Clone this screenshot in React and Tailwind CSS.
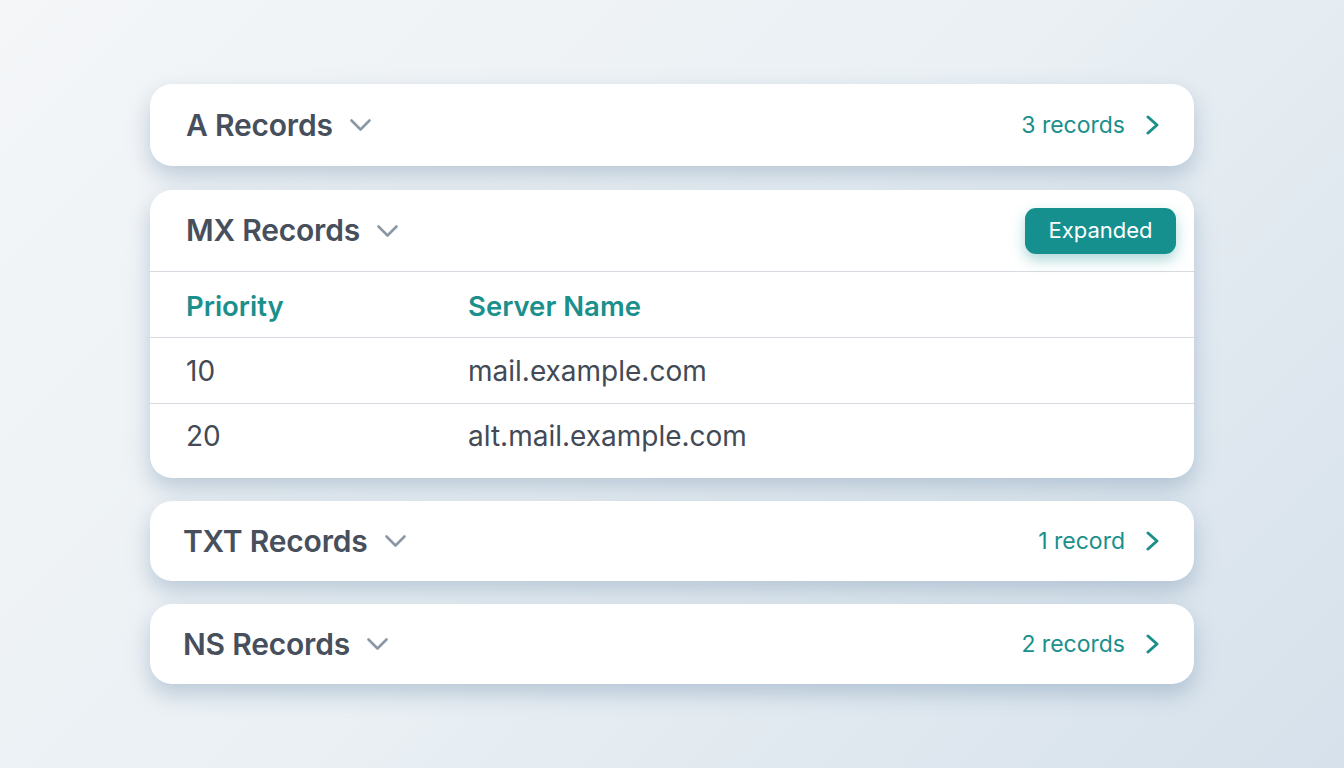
import React from "react";

const font = { fontFamily: "Inter, 'Noto Sans', sans-serif" };

function ChevronDown() {
  return (
    <svg width="23" height="14" viewBox="0 0 23 14" fill="none" stroke="#8a97a4" strokeWidth="2.6" strokeLinecap="round" strokeLinejoin="round">
      <path d="M2.5 2.5l9 9 9-9" />
    </svg>
  );
}

function ChevronRight() {
  return (
    <svg width="16" height="20" viewBox="0 0 16 20" fill="none" stroke="#1a8f8c" strokeWidth="3" strokeLinecap="round" strokeLinejoin="round">
      <path d="M3 2l9 8-9 8" />
    </svg>
  );
}

function Collapsed({ title, count, pl, h }) {
  return (
    <div className={`flex items-center justify-between rounded-[22px] bg-white pr-[33px] shadow-[0_10px_22px_rgba(110,140,170,0.4)] ${pl} ${h}`}>
      <div className="flex items-center gap-[16px]">
        <span className="text-[30px] font-semibold tracking-[-0.2px] text-[#474f5c]">{title}</span>
        <ChevronDown />
      </div>
      <div className="flex items-center gap-[20px]">
        <span className="text-[23px] text-[#1a8f8c]">{count}</span>
        <ChevronRight />
      </div>
    </div>
  );
}

export default function App() {
  return (
    <div
      style={font}
      className="flex min-h-[768px] w-full justify-center bg-[linear-gradient(135deg,#f4f6f8_0%,#eaf0f4_50%,#d6e1eb_100%)]"
    >
      <div className="mt-[84px] flex w-[1044px] flex-col gap-[23px]">
        <Collapsed title="A Records" count="3 records" pl="pl-[36px]" h="h-[82px] mb-[1px]" />

        <div className="overflow-hidden rounded-[22px] bg-white shadow-[0_10px_22px_rgba(110,140,170,0.4)]">
          <div className="flex h-[82px] items-center justify-between border-b border-[#d5dbe0] pl-[36px] pr-[18px]">
            <div className="flex items-center gap-[16px]">
              <span className="text-[30px] font-semibold tracking-[-0.2px] text-[#474f5c]">MX Records</span>
              <ChevronDown />
            </div>
            <div className="flex h-[46px] w-[151px] items-center justify-center rounded-[11px] bg-[#16908e] text-[22px] text-white shadow-[0_6px_14px_rgba(22,144,142,0.35)]">
              Expanded
            </div>
          </div>
          <div className="flex h-[66px] items-center border-b border-[#d5dbe0] pl-[36px] pt-[4px]">
            <span className="w-[282px] text-[27.5px] font-semibold text-[#1a8f8c]">Priority</span>
            <span className="text-[27.5px] font-semibold text-[#1a8f8c]">Server Name</span>
          </div>
          <div className="flex h-[66px] items-center border-b border-[#d5dbe0] pl-[36px]">
            <span className="w-[282px] text-[28px] text-[#434a55]">10</span>
            <span className="text-[28px] text-[#434a55]">mail.example.com</span>
          </div>
          <div className="flex h-[74px] items-center pl-[36px] pb-[10px]">
            <span className="w-[282px] text-[28px] text-[#434a55]">20</span>
            <span className="text-[28px] text-[#434a55]">alt.mail.example.com</span>
          </div>
        </div>

        <Collapsed title="TXT Records" count="1 record" pl="pl-[33px]" h="h-[80px]" />
        <Collapsed title="NS Records" count="2 records" pl="pl-[33px]" h="h-[80px]" />
      </div>
    </div>
  );
}
